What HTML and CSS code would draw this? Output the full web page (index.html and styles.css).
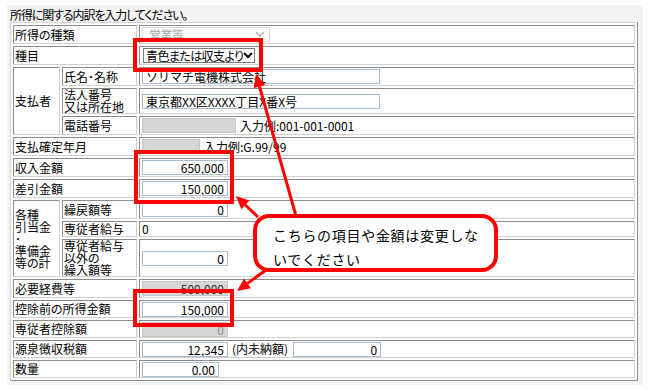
FILE: index.html
```html
<!DOCTYPE html>
<html lang="ja">
<head>
    <meta charset="UTF-8">
    <title>所得の内訳</title>
    <link rel="stylesheet" href="styles.css">
</head>
<body>
    <div class="panel">
        <p class="lead">所得に関する内訳を入力してください。</p>
        <table class="form">
            <colgroup>
                <col class="c1">
                <col class="c2">
                <col>
            </colgroup>
            <tr class="r19">
                <th colspan="2">所得の種類</th>
                <td>
                    <span class="select disabled"><span class="label">営業等</span>
                        <svg width="10" height="7" viewBox="0 0 10 7"><polyline points="1,1 5,5 9,1" fill="none" stroke="#b4b4b4" stroke-width="1.6"/></svg>
                    </span>
                </td>
            </tr>
            <tr class="r19">
                <th colspan="2">種目</th>
                <td>
                    <span class="select"><span class="label">青色または収支より</span>
                        <svg width="10" height="7" viewBox="0 0 10 7"><polyline points="1,1 5,5 9,1" fill="none" stroke="#000" stroke-width="2"/></svg>
                    </span>
                </td>
            </tr>
            <tr class="r19">
                <th rowspan="3">支払者</th>
                <th>氏名･名称</th>
                <td><input class="txt wide" type="text" value="ソリマチ電機株式会社"></td>
            </tr>
            <tr class="r26">
                <th class="multi">法人番号<br>又は所在地</th>
                <td><input class="txt wide" type="text" value="東京都XX区XXXX丁目X番X号"></td>
            </tr>
            <tr class="r19">
                <th>電話番号</th>
                <td><div class="field"><input class="txt off tel" type="text" value=""><span>入力例:001-001-0001</span></div></td>
            </tr>
            <tr class="r19">
                <th colspan="2">支払確定年月</th>
                <td><div class="field"><input class="txt off ym" type="text" value=""><span>入力例:G.99/99</span></div></td>
            </tr>
            <tr class="r19">
                <th colspan="2">収入金額</th>
                <td><input class="txt num" type="text" value="650,000"></td>
            </tr>
            <tr class="r19">
                <th colspan="2">差引金額</th>
                <td><input class="txt num" type="text" value="150,000"></td>
            </tr>
            <tr class="r19">
                <th rowspan="3" class="multi">各種<br>引当金<br>･<br>準備金<br>等の計</th>
                <th>繰戻額等</th>
                <td><input class="txt num" type="text" value="0"></td>
            </tr>
            <tr class="r16">
                <th>専従者給与</th>
                <td class="plain">0</td>
            </tr>
            <tr class="r36">
                <th class="multi">専従者給与<br>以外の<br>繰入額等</th>
                <td><input class="txt num" type="text" value="0"></td>
            </tr>
            <tr class="r19">
                <th colspan="2">必要経費等</th>
                <td><input class="txt num off" type="text" value="500,000"></td>
            </tr>
            <tr class="r18">
                <th colspan="2">控除前の所得金額</th>
                <td><input class="txt num" type="text" value="150,000"></td>
            </tr>
            <tr class="r18">
                <th colspan="2">専従者控除額</th>
                <td><input class="txt num off faded" type="text" value="0"></td>
            </tr>
            <tr class="r18">
                <th colspan="2">源泉徴収税額</th>
                <td><div class="field"><input class="txt num" type="text" value="12,345"><span>(内未納額)</span><input class="txt num unpaid" type="text" value="0"></div></td>
            </tr>
            <tr class="r18">
                <th colspan="2">数量</th>
                <td><input class="txt num qty" type="text" value="0.00"></td>
            </tr>
        </table>
    </div>

    <!-- 注意書きの赤枠と矢印 -->
    <svg class="marks" width="649" height="391" viewBox="0 0 649 391">
        <g fill="none" stroke="#ff0000" stroke-width="4">
            <rect x="135" y="40" width="126" height="30"/>
            <rect x="136" y="152" width="96" height="50"/>
            <rect x="135" y="291" width="97" height="34"/>
        </g>
        <g stroke="#ff0000" stroke-width="3">
            <line x1="296" y1="216" x2="259.5" y2="86.5"/>
            <line x1="258" y1="217" x2="245.4" y2="205"/>
            <line x1="266" y1="270" x2="247.5" y2="283.4"/>
        </g>
        <g fill="#ff0000">
            <polygon points="256,74 265.3,84.9 253.7,88.1"/>
            <polygon points="236,196 249.5,200.6 241.3,209.3"/>
            <polygon points="237,291 251,288.3 244,278.5"/>
        </g>
    </svg>

    <div class="callout">
        <p>こちらの項目や金額は変更しな</p>
        <p>いでください</p>
    </div>
</body>
</html>
```

FILE: styles.css
```css
* {
    box-sizing: border-box;
}
body {
    margin: 0;
    background-color: #ffffff;
    font-family: "Noto Sans CJK JP", "Liberation Sans", sans-serif;
    font-size: 12px;
    color: #000;
    font-feature-settings: "palt";
    position: relative;
    width: 649px;
    height: 391px;
}
.panel {
    position: relative;
    margin: 5px 0 0 7px;
    width: 636px;
    height: 380px;
    background-color: #f3f3f3;
    padding: 3px 0 0 3px;
}
.lead {
    margin: 0;
    line-height: 14px;
    height: 14px;
    letter-spacing: -1.1px;
}
.form {
    table-layout: fixed;
    width: 628px;
    border-collapse: separate;
    border-spacing: 2px;
    border: 1px solid;
    border-color: #d4d4d4 #8c8c8c #8c8c8c #d4d4d4;
    background-color: #ffffff;
}
.c1 {
    width: 47px;
}
.c2 {
    width: 75px;
}
.form th, .form td {
    border: 1px solid;
    border-color: #8c8c8c #d0d0d0 #d0d0d0 #8c8c8c;
    padding: 0 1px;
    vertical-align: middle;
    line-height: 12px;
    white-space: nowrap;
}
.form th {
    font-weight: normal;
    text-align: left;
}
.form th.multi {
    line-height: 12px;
}
.r19 th, .r19 td { height: 19px; }
.r18 th, .r18 td { height: 18px; }
.r16 th, .r16 td { height: 16px; }
.r26 th, .r26 td { height: 26px; }
.r36 th, .r36 td { height: 36px; }
.form td.plain {
    padding-left: 2px;
}
.field {
    display: flex;
    align-items: center;
    gap: 4px;
}
.txt {
    display: block;
    height: 15px;
    margin: 0 0 0 1px;
    padding: 0 3px;
    border: 1px solid #a9bcd6;
    background-color: #ffffff;
    font-family: "Noto Sans CJK JP", "Liberation Sans", sans-serif;
    font-size: 12px;
    color: #000;
    outline: none;
}
.field .txt {
    flex: none;
}
.wide {
    width: 238px;
}
.num {
    width: 86px;
    text-align: right;
}
.off {
    background-color: #d6d6d6;
    border-color: #c6c6c6;
    color: #333;
}
.faded {
    color: #8a8a8a;
}
.tel {
    width: 94px;
}
.ym {
    width: 58px;
}
.unpaid {
    width: 88px;
}
.qty {
    width: 77px;
}
.select {
    display: flex;
    align-items: center;
    justify-content: space-between;
    width: 112px;
    height: 15px;
    margin-left: 2px;
    padding: 0 2px 0 2px;
    border: 1px solid #7a7a7a;
    background-color: #ffffff;
}
.select .label {
    letter-spacing: -0.6px;
    white-space: nowrap;
}
.select svg {
    flex: none;
}
.select.disabled {
    width: 128px;
    margin-left: 1px;
    border-color: #dadada;
    background-color: #fbfbfb;
    color: #a8a8a8;
    padding: 0 4px 0 6px;
}
.marks {
    position: absolute;
    top: 0;
    left: 0;
    pointer-events: none;
}
.callout {
    position: absolute;
    left: 253px;
    top: 214px;
    width: 245px;
    height: 58px;
    border: 4px solid #ff0000;
    border-radius: 16px;
    background-color: #ffffff;
    padding: 5px 0 0 16px;
    font-size: 14px;
    letter-spacing: 0.7px;
    font-feature-settings: normal;
}
.callout p {
    margin: 0;
    line-height: 24px;
}
```
